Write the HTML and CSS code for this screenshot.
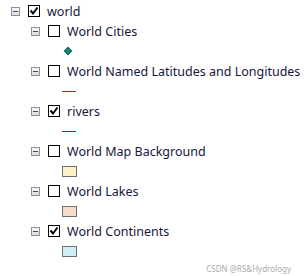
FILE: index.html
```html
<!DOCTYPE html>
<html>
<head>
<meta charset="utf-8">
<link rel="stylesheet" href="styles.css">
</head>
<body>
<div class="tree">
  <div class="row root">
    <span class="exp"><span class="minus"></span></span>
    <span class="chk on"><svg viewBox="0 0 10 10" width="10" height="10"><path d="M1.5 4.5 L4 7.5 L8.5 1.5" fill="none" stroke="#000" stroke-width="2"/></svg></span>
    <span class="label">world</span>
  </div>

  <div class="row lvl1">
    <span class="exp"><span class="minus"></span></span>
    <span class="chk"></span>
    <span class="label">World Cities</span>
  </div>
  <div class="row sym"><span class="diamond"></span></div>

  <div class="row lvl1">
    <span class="exp"><span class="minus"></span></span>
    <span class="chk"></span>
    <span class="label">World Named Latitudes and Longitudes</span>
  </div>
  <div class="row sym"><span class="line brown"></span></div>

  <div class="row lvl1">
    <span class="exp"><span class="minus"></span></span>
    <span class="chk on"><svg viewBox="0 0 10 10" width="10" height="10"><path d="M1.5 4.5 L4 7.5 L8.5 1.5" fill="none" stroke="#000" stroke-width="2"/></svg></span>
    <span class="label">rivers</span>
  </div>
  <div class="row sym"><span class="line purple"></span></div>

  <div class="row lvl1">
    <span class="exp"><span class="minus"></span></span>
    <span class="chk"></span>
    <span class="label">World Map Background</span>
  </div>
  <div class="row sym"><span class="swatch yellow"></span></div>

  <div class="row lvl1">
    <span class="exp"><span class="minus"></span></span>
    <span class="chk"></span>
    <span class="label">World Lakes</span>
  </div>
  <div class="row sym"><span class="swatch peach"></span></div>

  <div class="row lvl1">
    <span class="exp"><span class="minus"></span></span>
    <span class="chk on"><svg viewBox="0 0 10 10" width="10" height="10"><path d="M1.5 4.5 L4 7.5 L8.5 1.5" fill="none" stroke="#000" stroke-width="2"/></svg></span>
    <span class="label">World Continents</span>
  </div>
  <div class="row sym"><span class="swatch blue"></span></div>

  <div class="footer"><span class="mark">CSDN @RS&amp;Hydrology</span></div>
</div>
</body>
</html>
```

FILE: styles.css
```css
html, body {
  margin: 0;
  padding: 0;
  background: #fff;
}
.tree {
  padding-top: 1px;
  font-family: "Noto Sans", "Noto Sans CJK SC", sans-serif;
  font-size: 12.5px;
  color: #16163c;
}
.row {
  height: 20px;
  display: flex;
  align-items: center;
}
.root { padding-left: 11px; }
.lvl1 { padding-left: 31px; }
.sym { padding-left: 62px; }
.exp {
  width: 7px;
  height: 7px;
  border: 1px solid #8e8f8f;
  background: linear-gradient(#fafafa, #dcdcdc);
  display: flex;
  align-items: center;
  justify-content: center;
  flex: none;
}
.minus {
  width: 5px;
  height: 1px;
  background: #2c4a8c;
}
.chk {
  width: 10px;
  height: 10px;
  border: 1px solid #000;
  background: #fff;
  margin-left: 8px;
  display: flex;
  align-items: center;
  justify-content: center;
  flex: none;
}
.label {
  margin-left: 7px;
  white-space: nowrap;
}
.diamond {
  width: 4px;
  height: 4px;
  background: #1a8a80;
  transform: rotate(45deg);
  margin-left: 3px;
  border: 0.5px solid #0f5f58;
}
.line {
  width: 14px;
  height: 1px;
}
.brown { background: #8b3a10; }
.purple { background: #8a1a50; }
.swatch {
  width: 13px;
  height: 9px;
  border: 1px solid #707070;
}
.yellow { background: #fcf0c8; }
.peach { background: #f5dcc8; }
.blue { background: #d0eef5; }
.footer {
  display: flex;
  justify-content: flex-end;
  padding-right: 15px;
  margin-top: 2px;
}
.mark {
  font-size: 8px;
  color: #ababab;
  font-family: "Noto Sans", sans-serif;
}
```
